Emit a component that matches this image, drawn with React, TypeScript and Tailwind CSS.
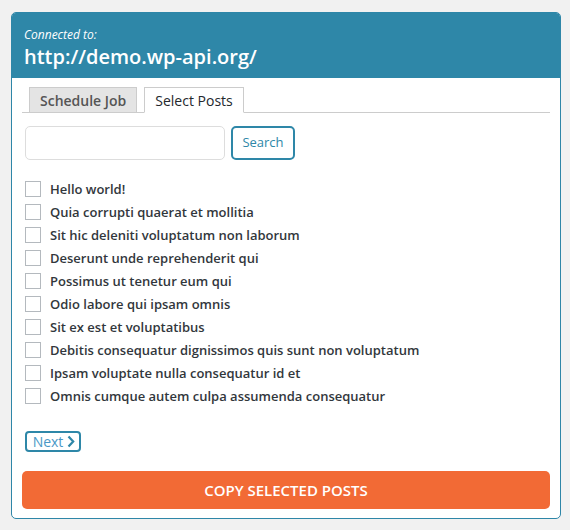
import { useState } from 'react'

const posts = [
  "Hello world!",
  "Quia corrupti quaerat et mollitia",
  "Sit hic deleniti voluptatum non laborum",
  "Deserunt unde reprehenderit qui",
  "Possimus ut tenetur eum qui",
  "Odio labore qui ipsam omnis",
  "Sit ex est et voluptatibus",
  "Debitis consequatur dignissimos quis sunt non voluptatum",
  "Ipsam voluptate nulla consequatur id et",
  "Omnis cumque autem culpa assumenda consequatur",
]

export default function App() {
  const [tab, setTab] = useState("select")
  const [checked, setChecked] = useState<string[]>([])

  const toggle = (p: string) =>
    setChecked((c) => (c.includes(p) ? c.filter((x) => x !== p) : [...c, p]))

  return (
    <div
      className="min-h-[530px] bg-[#f1f1f1] pt-[12px] pl-[11px]"
      style={{ fontFamily: '"Open Sans", "Noto Sans", sans-serif' }}
    >
      <div className="w-[550px] h-[507px] rounded-[5px] border border-[#2e86a8] bg-white overflow-hidden flex flex-col">
        {/* Header */}
        <div className="h-[65px] bg-[#2e87a8] text-white px-[12px] pt-[14px] shrink-0">
          <div className="text-[12px] italic leading-[16px]">Connected to:</div>
          <div className="text-[20px] font-semibold leading-[27px]">http://demo.wp-api.org/</div>
        </div>

        <div className="px-[10px] pt-[9px] flex flex-col flex-1">
          {/* Tabs */}
          <div className="flex items-end gap-[7px] pl-[7px] border-b border-[#cccccc] h-[26px]">
            <button
              onClick={() => setTab("schedule")}
              className={`h-[26px] px-[10px] text-[14px] font-semibold text-[#555] border border-[#cccccc] -mb-px ${
                tab === "schedule" ? 'bg-white border-b-white' : 'bg-[#e4e4e4]'
              }`}
            >
              Schedule Job
            </button>
            <button
              onClick={() => setTab("select")}
              className={`h-[26px] px-[10px] text-[14px] text-[#23282d] border border-[#cccccc] -mb-px ${
                tab === "select" ? 'bg-white border-b-white' : 'bg-[#e4e4e4]'
              }`}
            >
              Select Posts
            </button>
          </div>

          {/* Search */}
          <div className="flex items-center gap-[6px] pl-[3px] mt-[13px]">
            <input
              type="text"
              className="w-[200px] h-[34px] rounded-[5px] border border-[#dddddd] px-2 text-[13px] outline-none"
            />
            <button className="w-[64px] h-[34px] rounded-[5px] border-2 border-[#2e87a8] text-[13px] text-[#2e87a8] bg-white">
              Search
            </button>
          </div>

          {/* Post list */}
          <div className="flex flex-col gap-[7px] pl-[3px] mt-[21px]">
            {posts.map((p) => (
              <label key={p} className="flex items-center gap-[9px] h-[16px] cursor-pointer">
                <span
                  onClick={() => toggle(p)}
                  className="w-[16px] h-[16px] border border-[#b4b9be] bg-white shrink-0 flex items-center justify-center text-[12px] text-[#1e8cbe]"
                >
                  {checked.includes(p) ? '✓' : ''}
                </span>
                <span className="text-[13px] font-semibold text-[#32373c] leading-[16px]">{p}</span>
              </label>
            ))}
          </div>

          {/* Next */}
          <div className="pl-[3px] mt-[27px]">
            <button className="w-[56px] h-[21px] rounded-[4px] border-2 border-[#2e87a8] text-[14px] text-[#4a98c6] flex items-center justify-center gap-[4px] bg-white leading-none pl-[2px]">
              Next
              <svg width="8" height="13" viewBox="0 0 8 13" fill="none">
                <path d="M1.5 1.5L6.2 6.5L1.5 11.5" stroke="#2e87a8" strokeWidth="2.2" />
              </svg>
            </button>
          </div>

          {/* Copy */}
          <button className="mt-[19px] w-full h-[38px] rounded-[5px] bg-[#f26a35] text-white text-[15px] font-semibold uppercase">
            Copy Selected Posts
          </button>
        </div>
      </div>
    </div>
  )
}
